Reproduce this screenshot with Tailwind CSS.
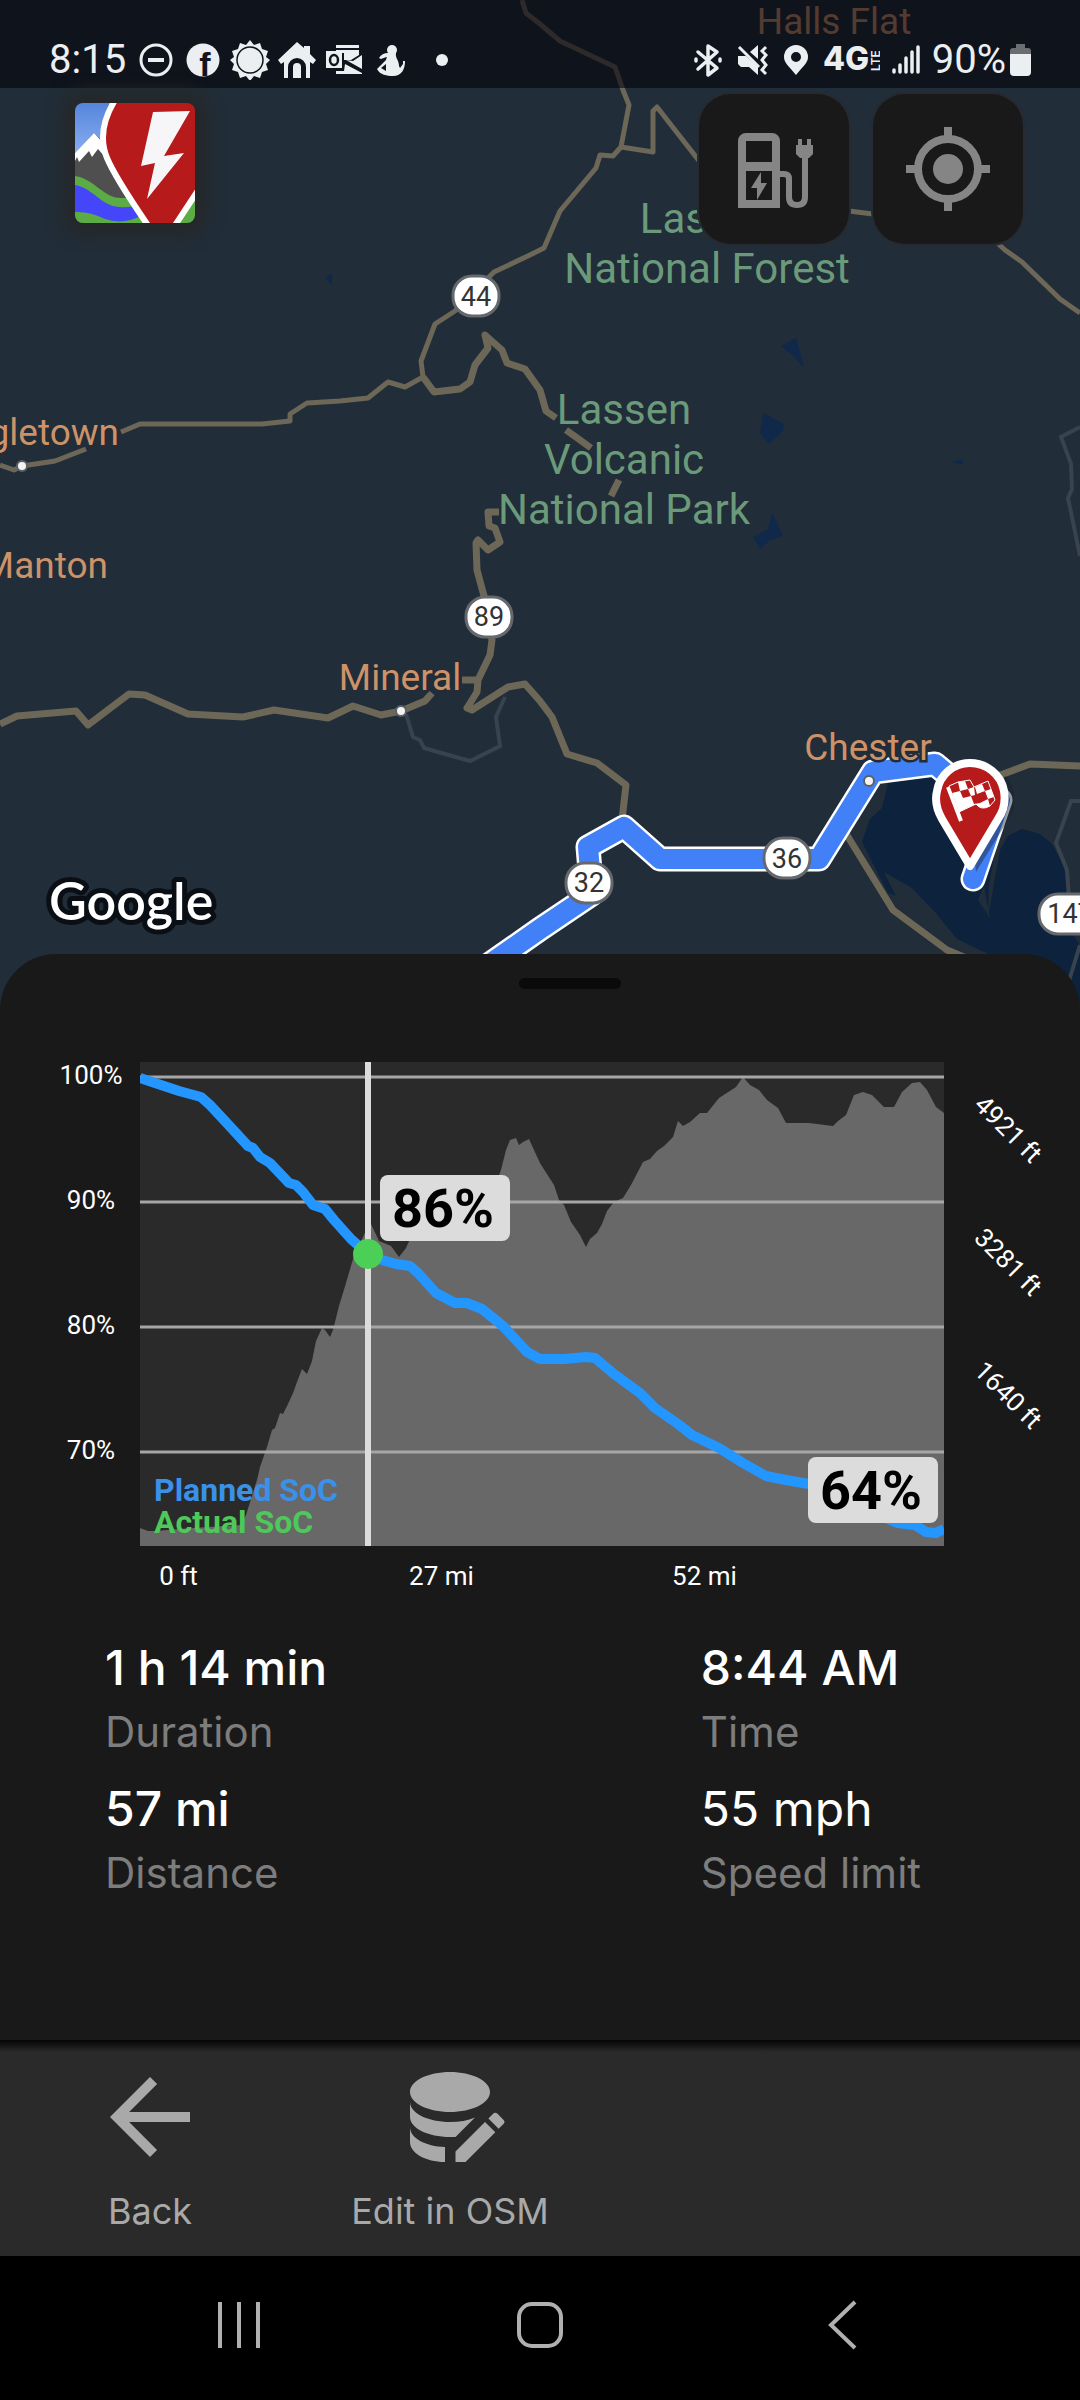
<!DOCTYPE html>
<html lang="en">
<head>
  <meta charset="UTF-8">
  <meta name="viewport" content="width=device-width, initial-scale=1.0">
  <title>Trip to Chester</title>
  <script src="https://cdn.jsdelivr.net/npm/@tailwindcss/browser@4"></script>
</head>
<body class="min-h-screen flex flex-col bg-black text-white font-['Roboto',sans-serif]">

  <!-- Map -->
  <section class="relative h-[1014px] shrink-0 overflow-hidden bg-[#212d38]">
    <svg class="block w-full h-full" viewBox="0 0 1080 1014" preserveAspectRatio="xMidYMid slice" role="img" aria-label="Route map">
      <!-- Water -->
      <g fill="#0c223d">
        <path d="M888 783L935 776L955 785L1000 820L989 886L988 918L1000 850L1008 836L1022 829L1040 834L1052 844L1064 866L1068 900L1070 930L1080 945V1014H1040L1020 958L988 954L957 939L912 902L888 893L862 842L870 819L882 808Z"/>
        <path fill="#212d38" d="M884 872L912 888L935 912L957 939L988 954H945L910 925Z"/>
        <path fill="#202d3a" d="M984 886L990 918L978 900Z"/>
      </g>
      <g fill="#10294a">
        <path d="M781 346L796 338L800 352L804 368L792 355Z"/>
        <path d="M763 413L784 424L783 431L769 444L760 433Z"/>
        <path d="M772 513L783 536L770 540L760 549L753 537L768 529Z"/>
        <path d="M952 462L963 459V465Z"/>
        <path d="M325 278L332 273V285Z"/>
      </g>

      <!-- Minor roads -->
      <g fill="none" stroke="#38434e" stroke-width="4">
        <path d="M406 714L413 737L420 740L424 748L470 761L500 746L496 717L505 697"/>
        <path d="M1080 427L1061 437L1071 464L1072 489L1068 498L1080 556"/>
        <path d="M1080 801H1071L1056 843L1067 870L1069 898M1080 945L1068 984"/>
      </g>

      <!-- Highways -->
      <g fill="none" stroke="#6c6757" stroke-linejoin="round" stroke-width="5">
        <path d="M522 0L526 13L540 24L560 41L615 67L623 90L629 105L621 147L613 156L600 155L596 168L560 211L544 248L532 254L494 272L455 311L435 324L421 361L423 377L405 387L388 382L368 398L340 401L307 403L290 414V421L262 424H140L121 432"/>
        <path d="M621 147L653 152V111L657 107L700 162L760 200L849 211L873 214L985 232L1005 250L1022 262L1060 299L1080 313"/>
        <path d="M0 465L14 470L22 466L55 461L86 449"/>
      </g>
      <g fill="none" stroke="#6c6757" stroke-linejoin="round" stroke-width="7">
        <path d="M423 377L434 392L460 389L470 382L475 365L488 348L485 335L502 350L507 363L525 369L540 390L546 411L556 418M566 430L580 440L591 448M619 480L611 496"/>
        <path d="M499 512H488L489 526L495 528L500 542L488 550L478 540L476 543L477 570L484 596L492 640L490 655L478 680L477 692L467 708L472 710L508 687L525 684L540 701L552 717L567 754L597 763L626 785L622 820"/>
        <path d="M462 680H478"/>
        <path d="M0 724L17 716L76 711L88 725L129 694L145 695L188 714L243 717L274 710L328 718L353 706L381 715L401 711L425 701L432 693"/>
        <path d="M990 779L1030 764L1080 766M845 832L893 910L947 950L1000 972"/>
      </g>

      <!-- Planned route -->
      <g fill="none" stroke-linejoin="round" stroke-linecap="round">
        <path stroke="#fff" stroke-width="25" d="M460 985L540 929L592 894L588 847L624 827L660 859H819L873 772L935 764L966 790L1000 800L973 879"/>
        <path stroke="#4280f8" stroke-width="20" d="M460 985L540 929L592 894L588 847L624 827L660 859H819L873 772L935 764L966 790L1000 800L973 879"/>
      </g>

      <!-- Towns -->
      <g fill="#f4f4f4" stroke="#5b6068" stroke-width="2">
        <circle cx="22" cy="466" r="5"/>
        <circle cx="401" cy="711" r="5"/>
        <circle cx="869" cy="781" r="5"/>
      </g>
      <g fill="#ce9268" stroke="#212d38" stroke-width="5" paint-order="stroke" font-size="37">
        <text x="834" y="34" text-anchor="middle">Halls Flat</text>
        <text x="119" y="445" text-anchor="end">Shingletown</text>
        <text x="108" y="578" text-anchor="end">Manton</text>
        <text x="400" y="690" text-anchor="middle">Mineral</text>
        <text x="868" y="760" text-anchor="middle">Chester</text>
      </g>

      <!-- Parks -->
      <g fill="#6b9a7a" stroke="#212d38" stroke-width="4" paint-order="stroke" font-size="42" text-anchor="middle">
        <text x="707" y="233">Lassen</text>
        <text x="707" y="283">National Forest</text>
        <text x="624" y="424">Lassen</text>
        <text x="624" y="474">Volcanic</text>
        <text x="624" y="524">National Park</text>
      </g>

      <!-- Highway shields -->
      <g fill="#fff" stroke="#65686c" stroke-width="3">
        <rect x="453" y="276" width="46" height="40" rx="19"/>
        <rect x="466" y="597" width="46" height="40" rx="19"/>
        <rect x="566" y="863" width="46" height="40" rx="19"/>
        <rect x="764" y="838" width="46" height="40" rx="19"/>
        <rect x="1039" y="894" width="62" height="40" rx="19"/>
      </g>
      <g fill="#333" font-size="27" text-anchor="middle">
        <text x="476" y="306">44</text>
        <text x="489" y="626">89</text>
        <text x="589" y="892">32</text>
        <text x="787" y="868">36</text>
        <text x="1070" y="923">147</text>
      </g>

      <!-- Destination pin -->
      <g>
        <path fill="#1a2330" fill-opacity=".45" d="M976 872L1013 812Q1018 790 1006 776L970 800Z"/>
        <path fill="#b71a1a" stroke="#fff" stroke-width="8" stroke-linejoin="round" d="M970 866L942 819C934 805 936 795 937 791C940 774 954 763 970 763S1001 774 1004 791C1006 803 1003 812 998 819Z"/>
        <path fill="none" stroke="#fff" stroke-width="4" d="M948 787L961 821"/>
        <path fill="#b71a1a" stroke="#fff" stroke-width="1" d="M949 786L958 782L970 780L974 787L988 781L995 800L990 806Q981 811 976 804L959 812Z"/>
        <path fill="#fff" d="M958 782L965 781L968 789L960 791ZM949 786L952 793L960 791L963 798L955 801L959 812L967 808L963 798L971 796L968 789L974 787L975 795L971 796L974 804L980 803L977 794L975 787L982 784L985 791L991 789L994 797L988 799L985 791L977 794L980 803L988 799L990 806Q982 811 976 804L967 808L963 798L955 801L952 793Z"/>
      </g>

      <text x="49" y="920" font-family="Lato, sans-serif" font-weight="600" font-size="52" fill="#fff" stroke="#0a0f16" stroke-width="10" stroke-linejoin="round" paint-order="stroke">Google</text>
    </svg>

    <!-- Status bar -->
    <header class="absolute inset-x-0 top-0 h-[88px] pt-8 px-[49px] flex items-center justify-between bg-[#04020a]/60 text-[#eceff2]">
      <div class="flex items-center gap-[7px]">
        <time class="text-[40px] leading-none mr-[3px]">8:15</time>
        <svg class="size-10" viewBox="0 0 40 40" fill="none" stroke="currentColor"><circle cx="20" cy="20" r="15" stroke-width="3"/><path stroke-width="4" d="M12 20h16"/></svg>
        <svg class="size-10" viewBox="0 0 40 40"><circle cx="20" cy="20" r="16.500" fill="currentColor"/><text x="22" y="36" text-anchor="middle" font-family="Liberation Sans, sans-serif" font-weight="700" font-size="34" fill="#12161c">f</text></svg>
        <svg class="size-10" viewBox="0 0 40 40"><path fill="currentColor" d="M20 0l4 5 6-2 2 6 6 2-2 6 4 3-4 4 2 6-6 2-2 6-6-2-4 5-4-5-6 2-2-6-6-2 2-6-4-4 4-3-2-6 6-2 2-6 6 2z"/><circle cx="20" cy="20" r="13" fill="none" stroke="#12161c" stroke-width="1.500"/></svg>
        <svg class="size-10" viewBox="0 0 40 40" fill="currentColor"><path d="M20 2l7 6V6h6v8l6 6-3 4-3-2v16h-4V27a9 9 0 0 0-18 0v11H7V22l-3 2-3-4z"/><path d="M16 38V27a4 4 0 0 1 8 0v11z"/></svg>
        <svg class="size-10" viewBox="0 0 40 40"><path fill="currentColor" d="M12 5h23v3H12zM12 10h23v5l-8 5h-7v-7h-8zM22 20l7 1 9-6v14zM12 31h8l1-7 17 9v1H12z"/><path fill="currentColor" d="M2 11h16v17H2z"/><ellipse cx="10" cy="20" rx="4" ry="5" fill="none" stroke="#12161c" stroke-width="2.500"/></svg>
        <svg class="size-10" viewBox="0 0 40 40" fill="currentColor"><circle cx="21" cy="10" r="5"/><path d="M17 13h8c-1 5 3 7 3 13l1 2 3-4v-3h2c0 8-3 15-12 15-6 0-13-1-16-7l9-9zM8 18q3-5 9-5l1 3-8 3z"/><path fill="#12161c" d="M10 28l5-4v7z"/></svg>
        <svg class="size-10 ml-1" viewBox="0 0 40 40" fill="currentColor"><circle cx="20" cy="20" r="6"/></svg>
      </div>
      <div class="flex items-center gap-3">
        <svg class="h-10 w-8" viewBox="0 0 32 40" fill="none" stroke="currentColor" stroke-width="3.500" stroke-linejoin="round" stroke-linecap="round"><path d="M6 12l19 16-9 7V6l9 6L6 29"/><path d="M4 19v2M28 19v2"/></svg>
        <svg class="h-10 w-8" viewBox="0 0 32 40" fill="currentColor"><path d="M2 16h8l12 11v8l-9-8H5l-3-3zM14 12l8-7v14z"/><path fill="none" stroke="currentColor" stroke-width="3" d="M3 7l20 20M30 7l-4 4 4 4-4 5 4 5-4 5 4 4"/></svg>
        <svg class="h-10 w-8" viewBox="0 0 32 40"><path fill="currentColor" fill-rule="evenodd" d="M16 35C9 26 4 23 4 17a12 12 0 0 1 24 0c0 6-5 9-12 18zm0-23a5 5 0 1 0 0 10 5 5 0 0 0 0-10z"/></svg>
        <svg class="h-10 w-14" viewBox="0 0 56 40" fill="currentColor" font-family="Inter, sans-serif" font-weight="800"><text x="-1" y="30" font-size="32">4G</text><text transform="translate(56 31) rotate(-90)" font-size="12" font-weight="600">LTE</text></svg>
        <svg class="h-10 w-7" viewBox="0 0 28 40" fill="none" stroke="currentColor" stroke-width="3.500" stroke-linecap="round"><path d="M2 30v2M8 25v7M14 18v14M20 12v20M26 7v25"/></svg>
        <span class="text-[40px] leading-none">90%</span>
        <svg class="h-10 w-[21px] -ml-2" viewBox="0 0 21 40"><path fill="#6a6d71" d="M6 4h9v4h3a3 3 0 0 1 3 3v4H0v-4a3 3 0 0 1 3-3h3z"/><path fill="currentColor" d="M0 14h21v18a4 4 0 0 1-4 4H4a4 4 0 0 1-4-4z"/></svg>
      </div>
    </header>

    <!-- App logo and map buttons -->
    <div class="absolute inset-x-0 top-[94px] pl-[75px] pr-[57px] flex items-start justify-between">
      <svg class="mt-[9px] size-[120px] rounded-lg shadow-[0_0_16px_12px_#26282a]" viewBox="0 0 120 120" role="img" aria-label="App logo">
        <defs>
          <linearGradient id="sky" x1="0" y1="0" x2="0" y2="1"><stop offset="0" stop-color="#5585dc"/><stop offset="1" stop-color="#93b5f4"/></linearGradient>
        </defs>
        <path fill="url(#sky)" d="M0 0h60v60H0z"/>
        <path fill="#4f4f4f" d="M0 50L19 30L60 70V120H0z"/>
        <path fill="#fff" d="M0 50L19 30L30 42V54L23 46L17 54L14 48L4 59L2 54L0 58Z"/>
        <path fill="#5cac45" d="M0 73C20 76 28 95 46 95H80V120H0Z"/>
        <path fill="#4545fa" d="M0 82C18 85 26 103 44 104Q56 105 66 101V113Q48 122 30 116Q14 108 0 109Z"/>
        <path fill="#5cac45" d="M96 120L120 80V120Z"/>
        <path fill="#b71a1a" stroke="#fff" stroke-width="6" d="M40 -3Q21 28 32 55Q40 74 72 121L78 130H95L124 86V-6Z"/>
        <path fill="#f6f6f8" d="M78 9L115 8L89 53L109 50L72 96L80 60L66 63Z"/>
      </svg>
      <div class="flex gap-6">
        <button class="size-[150px] rounded-[32px] bg-[#191919] text-[#858585] flex items-center justify-center ring-2 ring-[#262a31]" aria-label="Chargers">
          <svg class="size-[100px]" viewBox="0 0 100 100" fill="currentColor">
            <path fill-rule="evenodd" d="M22 14H48a8 8 0 0 1 8 8V89H14V22a8 8 0 0 1 8-8zM22 22V43H48V22zM22 52V81H48V52z"/>
            <path d="M37 53L27 69H33V81L43 64H37Z"/>
            <path fill="none" stroke="currentColor" stroke-width="6" d="M55 55H60Q65 55 65 60V78Q65 86 73 86T81 78V38"/>
            <path d="M74 20h4v6h5v-6h4v6h2v9l-4 4h-9l-4-4v-9h2z"/>
          </svg>
        </button>
        <button class="size-[150px] rounded-[32px] bg-[#191919] text-[#858585] flex items-center justify-center ring-2 ring-[#262a31]" aria-label="My location">
          <svg class="size-[100px]" viewBox="0 0 100 100" fill="none" stroke="currentColor" stroke-width="8">
            <circle cx="50" cy="50" r="30"/>
            <circle cx="50" cy="50" r="15" fill="currentColor" stroke="none"/>
            <path d="M50 8v9M50 83v9M8 50h9M83 50h9"/>
          </svg>
        </button>
      </div>
    </div>
  </section>

  <!-- Bottom sheet -->
  <main class="relative -mt-[60px] flex-1 rounded-t-[56px] bg-[#191919]">
    <div class="pt-6 pl-[60px]">
      <div class="mx-auto h-[11px] w-[102px] rounded-full bg-[#0a0a0a]"></div>
    </div>

    <!-- State of charge over elevation -->
    <div class="mt-[73px] grid grid-cols-[140px_1fr_136px] text-[26px] leading-[26px]">
      <div class="pl-[42px] flex flex-col gap-[99px] text-center">
        <span>100%</span>
        <span>90%</span>
        <span>80%</span>
        <span>70%</span>
      </div>
      <div class="relative">
        <svg class="block w-full h-[484px] bg-[#2a2a2a]" viewBox="0 0 804 484" preserveAspectRatio="none">
          <path fill="#686868" d="M0 484V466L8 469L15 469L53 466L101 463L106 453L117 418L120 405L127 385L132 368L135 366L140 351L143 352L148 342L153 331L157 320L162 307L167 312L172 299L176 279L182 266L185 268L190 275L193 268L199 244L206 221L213 197L228 164L231 162L239 179L251 184L259 195L266 186L270 177L308 156L356 121L361 108L366 88L370 78L376 76L379 83L383 80L389 77L394 88L400 101L405 109L414 123L419 138L424 143L431 160L440 173L446 185L450 177L457 171L462 162L467 149L474 140L483 136L491 123L503 100L510 97L517 89L524 84L533 75L538 59L543 64L550 60L560 51L567 51L579 36L596 25L603 15L610 23L619 28L627 38L638 46L646 61L669 61L693 64L698 59L706 53L714 33L723 30L732 33L744 45L754 45L762 30L772 21L780 20L787 28L796 45L804 51V484Z"/>
          <path fill="none" stroke="#a6a6a6" stroke-width="3" d="M0 15H804M0 140H804M0 265H804M0 390H804"/>
          <path fill="none" stroke="#2496ff" stroke-width="10" stroke-linejoin="round" d="M0 16L15 21L39 29L61 35L70 43L84 58L108 84L113 86L120 95L130 101L149 121L156 123L163 130L173 143L185 147L194 158L211 177L228 192L242 198L256 202L270 204L278 211L296 231L315 241L327 241L342 247L363 264L387 290L400 297L424 297L446 295L455 296L474 312L500 331L515 346L538 362L552 373L579 386L603 401L626 414L646 418L669 422L710 442L758 461L775 463L786 470L796 471L804 467"/>
          <path fill="none" stroke="#dcdcdc" stroke-width="6" d="M228 0V484"/>
          <circle cx="228" cy="192" r="15" fill="#4ccf56"/>
        </svg>
        <div class="absolute left-[240px] top-[113px] h-[66px] w-[130px] pr-1 rounded-lg bg-[#dcdcdc] text-black text-[54px] leading-[68px] font-bold text-center">86%</div>
        <div class="absolute right-1.5 bottom-[23px] h-[66px] w-[130px] pr-1 rounded-lg bg-[#dcdcdc] text-black text-[54px] leading-[68px] font-bold text-center">64%</div>
        <div class="absolute left-3.5 bottom-2 text-[32px] leading-8 font-bold">
          <p class="text-[#3a91ea]">Planned SoC</p>
          <p class="text-[#4fc85a]">Actual SoC</p>
        </div>
      </div>
      <div class="pt-[54px] pr-2 flex flex-col items-center gap-[107px]">
        <span class="rotate-45">4921 ft</span>
        <span class="rotate-45">3281 ft</span>
        <span class="rotate-45">1640 ft</span>
      </div>
    </div>
    <div class="mt-[17px] pl-[47px] pr-[244px] grid grid-cols-3 text-center text-[26px] leading-[26px]">
      <span>0 ft</span>
      <span>27 mi</span>
      <span>52 mi</span>
    </div>

    <!-- Trip summary -->
    <dl class="mt-[47px] pl-[105px] pb-[135px] grid grid-cols-[11fr_7fr] gap-y-[13px] font-['Inter',sans-serif] text-[48px] leading-[64px]">
      <div class="flex flex-col-reverse">
        <dt class="text-[42px] text-[#7d7d7d]">Duration</dt>
        <dd class="font-medium">1 h 14 min</dd>
      </div>
      <div class="flex flex-col-reverse">
        <dt class="text-[42px] text-[#7d7d7d]">Time</dt>
        <dd class="font-medium">8:44 AM</dd>
      </div>
      <div class="flex flex-col-reverse">
        <dt class="text-[42px] text-[#7d7d7d]">Distance</dt>
        <dd class="font-medium">57 mi</dd>
      </div>
      <div class="flex flex-col-reverse">
        <dt class="text-[42px] text-[#7d7d7d]">Speed limit</dt>
        <dd>55 mph</dd>
      </div>
    </dl>
  </main>

  <!-- Actions -->
  <div class="h-[216px] shrink-0 bg-[#2a2a2a] text-[#a9a9a9] font-['Inter',sans-serif] text-[36px] leading-10">
    <div class="h-3 bg-linear-to-b from-[#060606] to-[#2a2a2a]"></div>
    <div class="flex">
      <button class="w-[300px] flex flex-col items-center pt-[5px] gap-[14px]">
        <svg class="size-[120px]" viewBox="0 0 24 24" fill="currentColor"><path d="M20 11H7.830l5.590-5.590L12 4l-8 8 8 8 1.410-1.410L7.830 13H20v-2z"/></svg>
        Back
      </button>
      <button class="w-[300px] flex flex-col items-center pt-[5px] gap-[14px]">
        <svg class="size-[120px]" viewBox="0 0 24 24" fill="currentColor"><path d="M12 3c4.420 0 8 1.790 8 4s-3.580 4-8 4-8-1.790-8-4 3.580-4 8-4zM4 9v3c0 2.210 3.580 4 8 4h1.100L17 12.100c-1.400.6-3.100.9-5 .9-4.420 0-8-1.790-8-4zM4 14v3c0 2.210 3.130 4 7 4v-3c-3.900-.1-7-1.800-7-4zM13.100 18.900L19 13l2.060 2.060L15.100 21h-2zM21.040 11.140c.15 0 .3.060.41.170l1.280 1.280c.22.210.22.560 0 .770l-1 1-2.050-2.050 1-1c.1-.1.220-.17.360-.17z"/></svg>
        Edit in OSM
      </button>
    </div>
  </div>

  <!-- System navigation -->
  <nav class="h-36 shrink-0 px-[88px] pb-1.5 flex items-center bg-black text-[#b0b0b0]">
    <button class="flex-1 flex justify-center" aria-label="Recent apps">
      <svg class="size-[50px]" viewBox="0 0 50 50" fill="none" stroke="currentColor" stroke-width="4"><path d="M6 2v46M25 2v46M44 2v46"/></svg>
    </button>
    <button class="flex-1 flex justify-center" aria-label="Home">
      <svg class="size-[50px]" viewBox="0 0 50 50" fill="none" stroke="currentColor" stroke-width="4"><rect x="4" y="4" width="42" height="42" rx="13"/></svg>
    </button>
    <button class="flex-1 flex justify-center" aria-label="Go back">
      <svg class="size-[50px]" viewBox="0 0 50 50" fill="none" stroke="currentColor" stroke-width="4"><path d="M39 2L15 25L39 48"/></svg>
    </button>
  </nav>
</body>
</html>
